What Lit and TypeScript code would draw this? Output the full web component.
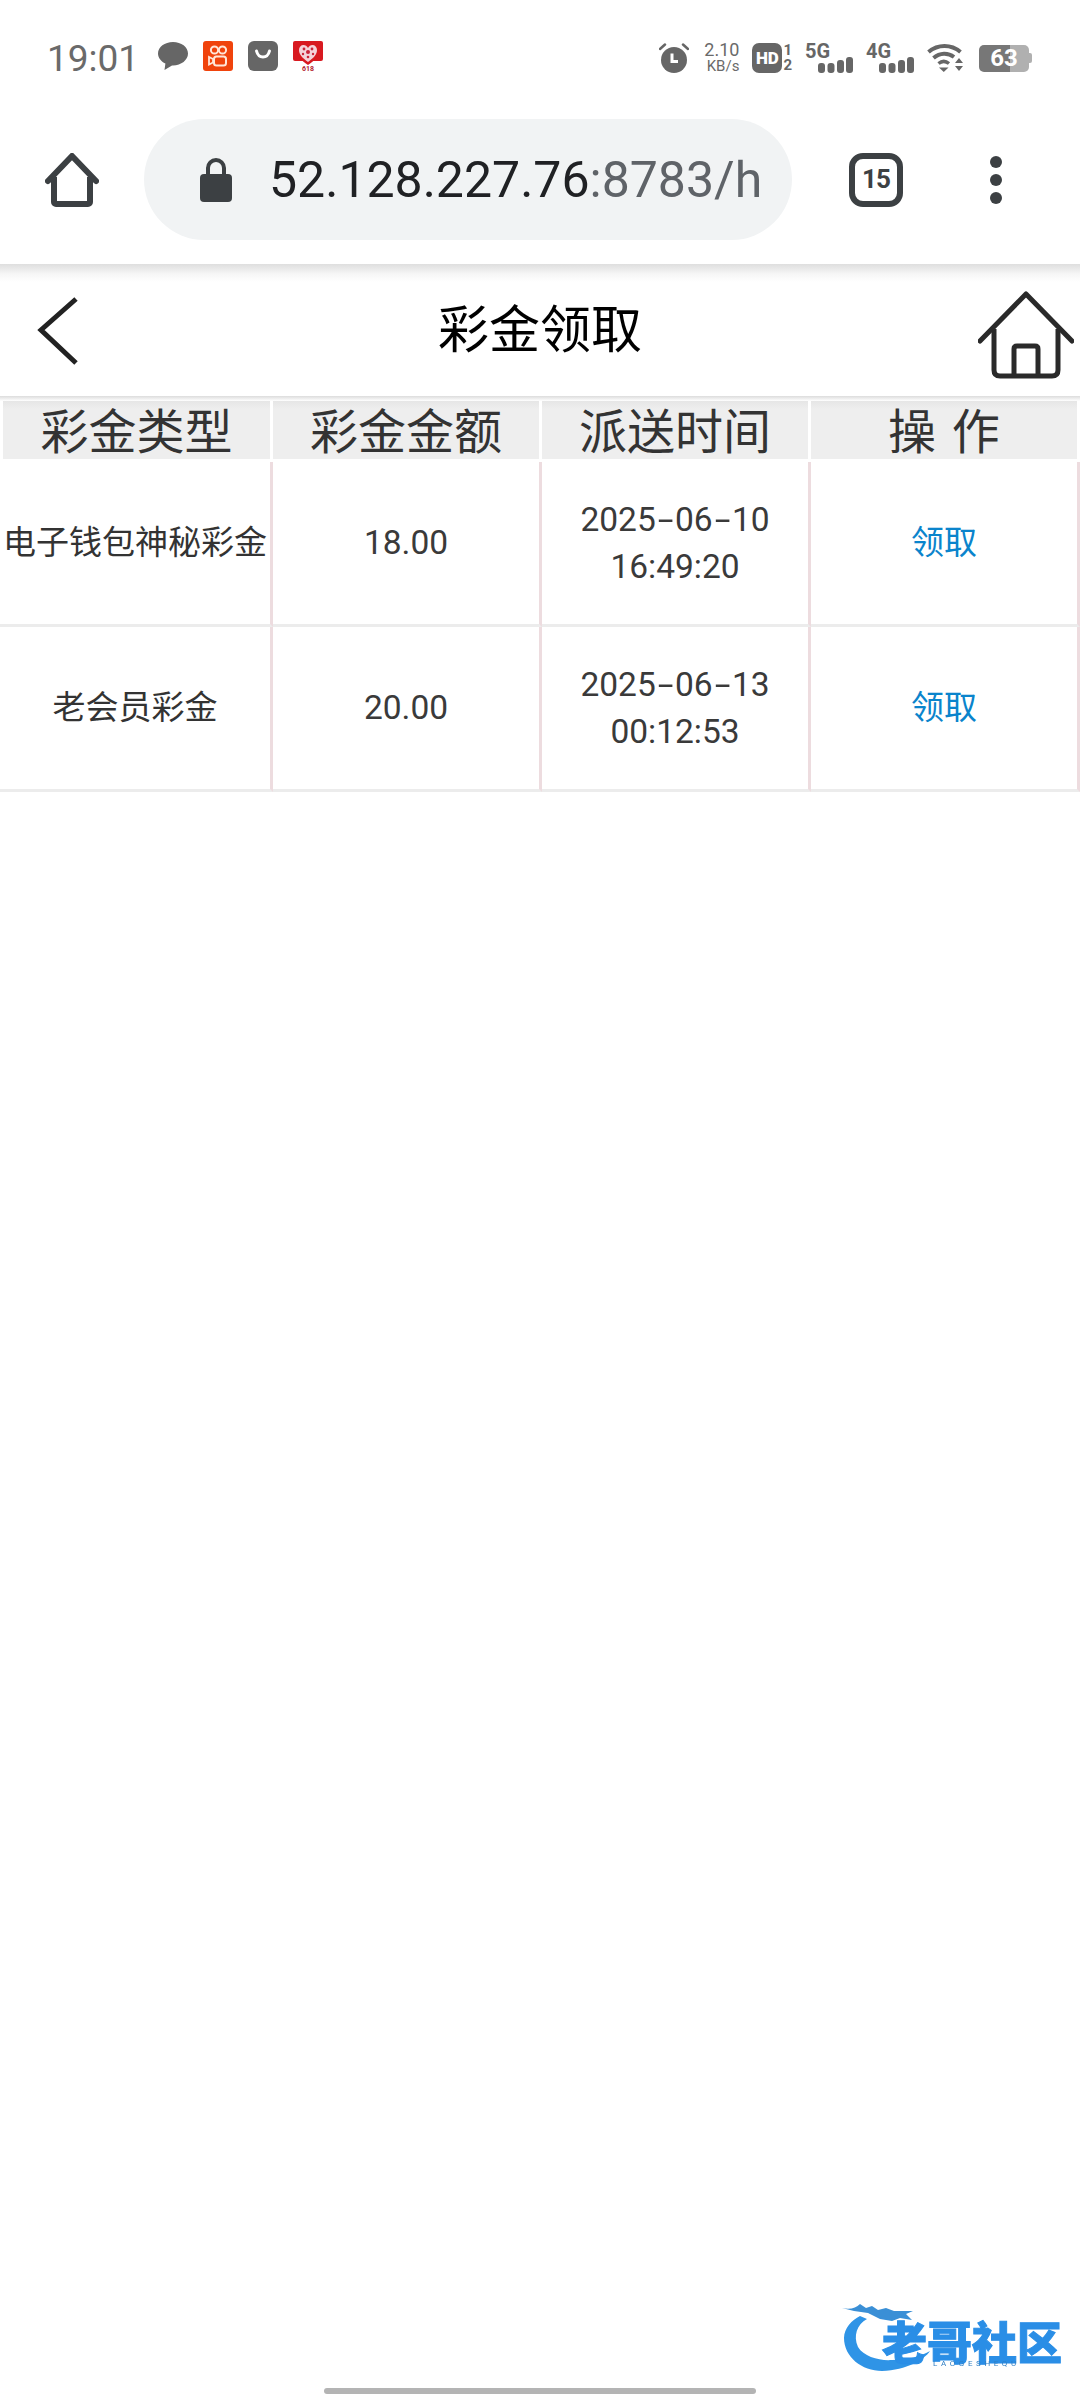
import { css, html, LitElement, svg } from 'lit';
import { customElement } from 'lit/decorators.js';

const rows = [
  { type: '电子钱包神秘彩金', amount: '18.00', date: ['2025', '06', '10'], time: '16:49:20' },
  { type: '老会员彩金', amount: '20.00', date: ['2025', '06', '13'], time: '00:12:53' },
];

const headers = ['彩金类型', '彩金金额', '派送时间', '操 作'];

// signal bars with the network label on top
const signal = (label: string) => svg`
  <svg class="signal" width="48" height="30" viewBox="0 0 48 30">
    <text x="0" y="15" class="net">${label}</text>
    <rect x="13" y="20" width="7" height="10" rx="3" fill="#666"/>
    <rect x="22.500" y="20" width="7" height="10" rx="3" fill="#666"/>
    <rect x="32" y="17" width="7" height="13" rx="3" fill="#666"/>
    <rect x="41" y="14" width="7" height="16" rx="3" fill="#666"/>
  </svg>`;

@customElement('app-root')
export class AppRoot extends LitElement {
  static styles = css`
    :host {
      display: block;
      width: 1080px;
      height: 2400px;
      background: #fff;
      font-family: 'Noto Sans CJK SC', sans-serif;
    }

    .page {
      display: flex;
      flex-direction: column;
      height: 2400px;
    }

    /* status bar */
    .status {
      display: flex;
      justify-content: space-between;
      align-items: center;
      height: 100px;
      box-sizing: border-box;
      padding: 16px 48px 0 47px;
    }

    .status-left,
    .status-right {
      display: flex;
      align-items: center;
    }

    .clock {
      font: 37px Roboto, sans-serif;
      color: #6a6a6a;
      width: 111px;
    }

    .notif {
      display: flex;
      gap: 15px;
      align-items: center;
      margin-bottom: 4px;
    }

    .status-right {
      gap: 13px;
    }

    .speed {
      display: flex;
      flex-direction: column;
      align-items: flex-end;
      font-family: Roboto, sans-serif;
      color: #6a6a6a;
      line-height: 17px;
      width: 37px;
    }

    .speed .v {
      font-size: 18px;
    }

    .speed .u {
      font-size: 15px;
    }

    .signal {
      overflow: visible;
    }

    .net {
      font: bold 20px Roboto, sans-serif;
      fill: #666;
    }

    .hd {
      display: flex;
      align-items: center;
      gap: 1px;
    }

    .hd-box {
      width: 30px;
      height: 30px;
      border-radius: 7px;
      background: #666;
      color: #fff;
      font: 900 17px/30px Roboto, sans-serif;
      text-align: center;
    }

    .sims {
      display: flex;
      flex-direction: column;
      font: bold 15px/15px Roboto, sans-serif;
      color: #666;
      text-align: center;
    }

    .wifi {
      margin-right: 3px;
    }

    .battery {
      display: flex;
      align-items: center;
    }

    .battery-body {
      width: 50px;
      height: 27px;
      border-radius: 5px;
      background: linear-gradient(90deg, #777 0 63%, #b0b0b0 63%);
      color: #fff;
      font: bold 24px/27px Roboto, sans-serif;
      text-align: center;
    }

    .battery-nub {
      width: 3px;
      height: 10px;
      border-radius: 0 2px 2px 0;
      background: #b0b0b0;
    }

    /* browser toolbar */
    .toolbar {
      display: flex;
      align-items: center;
      box-sizing: border-box;
      height: 164px;
      padding: 19px 0 24px 45px;
    }

    .pill {
      display: flex;
      align-items: center;
      gap: 37px;
      width: 648px;
      height: 121px;
      margin-left: 45px;
      margin-right: 57px;
      box-sizing: border-box;
      padding-left: 56px;
      border-radius: 61px;
      background: #f1f3f4;
      overflow: hidden;
    }

    .url {
      font: 50px Roboto, sans-serif;
      color: #5f6368;
      white-space: nowrap;
    }

    .url b {
      font-weight: 400;
      color: #202124;
    }

    .tabs {
      box-sizing: border-box;
      width: 54px;
      height: 54px;
      border: 6px solid #3c4043;
      border-radius: 14px;
      color: #3c4043;
      font: bold 26px/41px 'Roboto', sans-serif;
      text-align: center;
      letter-spacing: -1px;
    }

    .dots {
      display: flex;
      flex-direction: column;
      gap: 6px;
      margin-left: 87px;
    }

    .dots i {
      display: block;
      width: 12px;
      height: 12px;
      border-radius: 50%;
      background: #3c4043;
    }

    /* page title */
    .title-bar {
      display: grid;
      grid-template-columns: 1fr auto 1fr;
      align-items: center;
      height: 132px;
      padding: 0 6px;
      background: linear-gradient(#dedede, #f6f6f6 10px, #fff 18px);
    }

    .title {
      font-size: 51px;
      color: #000;
      line-height: 124px;
      margin-bottom: 10px;
    }

    .back {
      margin-left: 30px;
    }

    .home {
      justify-self: end;
      margin-top: 8px;
    }

    .back,
    .home {
      filter: blur(0.5px);
    }

    /* table */
    .table {
      display: grid;
      grid-template-columns: 273px 269px 269px 269px;
    }

    .th {
      height: 58px;
      margin: 5px 3px 0 0;
      background: linear-gradient(#e6e6e6, #eeeeee 8px);
      color: #333;
      font-size: 48px;
      line-height: 54px;
      word-spacing: 5px;
      text-align: center;
      white-space: pre;
    }

    .th:first-child {
      margin-left: 3px;
    }

    .shade {
      grid-column: 1 / -1;
      display: grid;
      grid-template-columns: subgrid;
      background: linear-gradient(#dcdcdc, #fff 5px);
    }

    .td {
      box-sizing: border-box;
      height: 165px;
      padding-bottom: 4px;
      display: flex;
      flex-direction: column;
      align-items: center;
      justify-content: center;
      border-right: 3px solid #eddcdf;
      border-bottom: 3px solid #ececec;
      color: #333;
      font-size: 33px;
      line-height: 47.500px;
      white-space: nowrap;
      background: #fff;
    }

    .num {
      padding-bottom: 0;
      font-family: Roboto, 'Noto Sans CJK SC', sans-serif;
      font-size: 33.500px;
      color: #3a3a3a;
    }

    .dash {
      display: inline-block;
      margin: 0 5px;
      transform: scaleX(1.700);
    }

    .link {
      color: #0a84cc;
    }

    .gap {
      grid-column: 1 / -1;
      height: 3px;
    }

    /* bottom of the page */
    .footer {
      margin-top: auto;
      display: flex;
      flex-direction: column;
    }

    .logo {
      align-self: flex-end;
      display: flex;
      margin: 0 17px 16px 0;
      filter: blur(0.7px);
      width: 221px;
      height: 70px;
    }

    .dragon {
      flex: none;
      margin-right: -50px;
    }

    .logo-name {
      font-size: 45px;
      font-weight: 900;
      color: #2a8ee6;
      line-height: 36px;
      white-space: nowrap;
      margin-top: 21px;
      -webkit-text-stroke: 1px #2a8ee6;
    }

    .logo-sub {
      font: 8px/9px Roboto, sans-serif;
      color: #2f7fc4;
      letter-spacing: 3.600px;
      margin-left: 51px;
      white-space: nowrap;
    }

    .gesture {
      align-self: center;
      width: 432px;
      height: 6px;
      margin-bottom: 6px;
      border-radius: 3px;
      background: #b4b4b4;
    }
  `;

  render() {
    return html`
      <div class="page">
        <div class="status">
          <div class="status-left">
            <span class="clock">19:01</span>
            <div class="notif">
              <svg width="30" height="28" viewBox="0 0 30 28">
                <path d="M15 0C6.700 0 0 5 0 11.500c0 4.300 3 7.900 7.400 10L6.500 28l7.500-4.600h1C23.300 23.400 30 18 30 11.500 30 5 23.300 0 15 0z" fill="#666"/>
              </svg>
              <svg width="30" height="30" viewBox="0 0 30 30">
                <rect width="30" height="30" rx="3" fill="#f0430c"/>
                <circle cx="11.500" cy="9" r="3.600" fill="none" stroke="#ffe6d8" stroke-width="2"/>
                <circle cx="19.500" cy="9" r="3.600" fill="none" stroke="#ffe6d8" stroke-width="2"/>
                <rect x="11" y="15.500" width="12" height="9" rx="2.500" fill="none" stroke="#ffe6d8" stroke-width="2"/>
                <path d="M10 18l-4-2v7.500l4-2z" fill="none" stroke="#ffe6d8" stroke-width="1.800"/>
              </svg>
              <svg width="30" height="30" viewBox="0 0 30 30">
                <rect width="30" height="30" rx="6" fill="#666"/>
                <path d="M8.500 10c1 4 3.500 6 6.500 6s5.500-2 6.500-6" fill="none" stroke="#fff" stroke-width="3" stroke-linecap="round"/>
              </svg>
              <svg width="30" height="30" viewBox="0 0 30 30">
                <rect y="0" width="30" height="20" rx="2" fill="#d81920"/>
                <path d="M15 24C8 19 3.500 15 3.500 8.500 3.500 4 7 1.500 10 1.500c2.500 0 4 1 5 3 1-2 2.500-3 5-3 3 0 6.500 2.500 6.500 7C26.500 15 22 19 15 24z" fill="#d81920"/>
                <path d="M15 21C9.500 17 6 13.500 6 9c0-3 2-5 4.500-5 2 0 3.500 1 4.500 3 1-2 2.500-3 4.500-3C22 4 24 6 24 9c0 4.500-3.500 8-9 12z" fill="#f4d3da"/>
                <g fill="#c9243a">
                  <circle cx="11" cy="8" r="1.400"/><circle cx="19" cy="8" r="1.400"/><circle cx="15" cy="11" r="2"/>
                  <circle cx="10" cy="13" r="1.200"/><circle cx="20" cy="13" r="1.200"/><circle cx="15" cy="16" r="1.300"/>
                </g>
                <text x="15" y="29.500" text-anchor="middle" font-family="Roboto" font-size="7" font-weight="700" fill="#b3202c">618</text>
              </svg>
            </div>
          </div>
          <div class="status-right">
            <svg width="30" height="30" viewBox="0 0 30 30">
              <circle cx="15" cy="17" r="13" fill="#666"/>
              <path d="M1 6l5-4.500M29 6l-5-4.500" stroke="#666" stroke-width="2.500" stroke-linecap="round"/>
              <path d="M13 10.500v8h6" fill="none" stroke="#fff" stroke-width="3"/>
            </svg>
            <div class="speed">
              <span class="v">2.10</span>
              <span class="u">KB/s</span>
            </div>
            <div class="hd">
              <div class="hd-box">HD</div>
              <div class="sims"><span>1</span><span>2</span></div>
            </div>
            ${signal('5G')}
            ${signal('4G')}
            <svg class="wifi" width="36" height="28" viewBox="0 0 36 28">
              <path d="M1.500 8C11 0 24 0 33.500 8" fill="none" stroke="#666" stroke-width="4"/>
              <path d="M6.500 14C13 8.500 21 8.500 27 13" fill="none" stroke="#666" stroke-width="4"/>
              <path d="M11.500 19.500c3.500-2.800 7-2.800 10.500 0" fill="none" stroke="#666" stroke-width="3.500"/>
              <path d="M12 23.500h9.500l-4.750 4.500z" fill="#666"/>
              <path d="M28 19h8l-4-5zM28 22h8l-4 5z" fill="#666"/>
            </svg>
            <div class="battery">
              <div class="battery-body">63</div>
              <div class="battery-nub"></div>
            </div>
          </div>
        </div>

        <div class="toolbar">
          <svg width="54" height="54" viewBox="0 0 54 54">
            <path d="M3 28L27 3l24 25" fill="none" stroke="#3c4043" stroke-width="6" stroke-linecap="round" stroke-linejoin="round"/>
            <path d="M9 24v25a2 2 0 0 0 2 2h32a2 2 0 0 0 2-2V24" fill="none" stroke="#3c4043" stroke-width="6"/>
          </svg>
          <div class="pill">
            <svg width="32" height="44" viewBox="0 0 32 44">
              <path d="M8 18V10a8 8 0 0 1 16 0v8" fill="none" stroke="#3c4043" stroke-width="4"/>
              <rect y="16" width="32" height="28" rx="4" fill="#3c4043"/>
            </svg>
            <span class="url"><b>52.128.227.76</b>:8783/h</span>
          </div>
          <div class="tabs">15</div>
          <div class="dots"><i></i><i></i><i></i></div>
        </div>

        <div class="title-bar">
          <svg class="back" width="44" height="70" viewBox="0 0 44 70">
            <path d="M40 3L5 34l35 33" fill="none" stroke="#222" stroke-width="5"/>
          </svg>
          <div class="title">彩金领取</div>
          <svg class="home" width="96" height="88" viewBox="0 0 96 88">
            <path d="M2 50L48 3l46 47" fill="none" stroke="#2a2a2a" stroke-width="5" stroke-linecap="round" stroke-linejoin="round"/>
            <path d="M16 38v41q0 6 6 6h52q6 0 6-6V38" fill="none" stroke="#2a2a2a" stroke-width="5"/>
            <path d="M36 85V58q0-3 3-3h18q3 0 3 3v27" fill="none" stroke="#2a2a2a" stroke-width="5"/>
          </svg>
        </div>

        <div class="table">
          <div class="shade">
            ${headers.map((h) => html`<div class="th">${h}</div>`)}
          </div>
          <div class="gap"></div>
          ${rows.map(
            (r) => html`
              <div class="td">${r.type}</div>
              <div class="td num">${r.amount}</div>
              <div class="td num">
                <span>${r.date[0]}<span class="dash">-</span>${r.date[1]}<span class="dash">-</span>${r.date[2]}</span>
                <span>${r.time}</span>
              </div>
              <div class="td link">领取</div>
            `,
          )}
        </div>

        <div class="footer">
          <div class="logo">
            <svg class="dragon" width="90" height="70" viewBox="0 0 90 70">
              <path d="M25 17C15 22 11 34 16 45C22 55 38 59 50 58C65 58 80 54 88 49C82 58 65 68 40 69C20 69 2 55 2 36C2 26 10 18 18 14Z" fill="#2f94e6"/>
              <path d="M0 6C8 8 14 6 18 2L24 6L30 4L36 8L44 6L52 9L71 9L64 12L70 18L58 16L50 19L38 17L26 11L12 9Z" fill="#3a8fd6"/>
            </svg>
            <div>
              <div class="logo-name">老哥社区</div>
              <div class="logo-sub">LAOGESHEQU</div>
            </div>
          </div>
          <div class="gesture"></div>
        </div>
      </div>
    `;
  }
}
